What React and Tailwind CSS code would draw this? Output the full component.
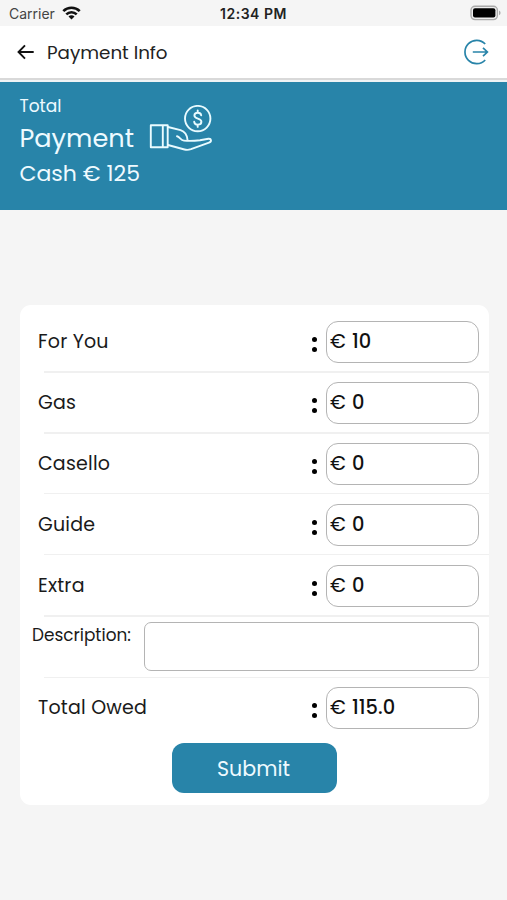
const amounts = [
  { label: "For You", value: "10" },
  { label: "Gas", value: "0" },
  { label: "Casello", value: "0" },
  { label: "Guide", value: "0" },
  { label: "Extra", value: "0" },
];

function StatusBar() {
  return (
    <div className="h-[26px] grid grid-cols-3 items-center px-[6px] text-[#222] font-['Inter',sans-serif]">
      <div className="flex items-center gap-[7px] pl-[3px] pt-[1px]">
        <span className="text-[14px] leading-none text-[#444]">Carrier</span>
        <svg className="-mt-[2px]" width="19" height="14" viewBox="0 0 19 14">
          <g fill="none" stroke="#111" strokeWidth="2.6">
            <path d="M1.3 5.2a11.6 11.6 0 0 1 16.4 0" />
            <path d="M4.3 8.4a7.4 7.4 0 0 1 10.4 0" />
          </g>
          <path d="M9.5 13.6 6.5 10.5a4.2 4.2 0 0 1 6 0z" fill="#111" />
        </svg>
      </div>
      <div className="pt-[1px] text-center text-[14px] leading-none font-semibold tracking-[0.5px] whitespace-nowrap">12:34 PM</div>
      <div className="flex justify-end">
        <svg width="31" height="16" viewBox="0 0 31 16">
          <rect x="1" y="1.2" width="26.4" height="13.4" rx="4" fill="#eee" stroke="#aaa" strokeWidth="1.4" />
          <rect x="3" y="3.2" width="22.4" height="9.4" rx="2" fill="#000" />
          <path d="M29 5.6c2 .8 2 3.8 0 4.6z" fill="#aaa" />
        </svg>
      </div>
    </div>
  );
}

function Header() {
  return (
    <header className="h-[52px] bg-white flex items-center pl-[17px] pr-[18px]">
      <svg width="18" height="16" viewBox="0 0 18 16" fill="none" stroke="#111" strokeWidth="1.9">
        <path d="M16.7 8H1.8M8 1.3 1.5 8 8 14.7" />
      </svg>
      <h1 className="ml-[12px] pt-[2px] flex-1 text-[18.3px] leading-none text-[#222]">Payment Info</h1>
      <svg width="26" height="26" viewBox="0 0 26 26" fill="none" stroke="#2884a9" strokeWidth="1.7">
        <path d="M22.2 5A11.7 11.7 0 1 0 22.2 21" />
        <path d="M9.8 13h14.5M20 8.8l4.4 4.2-4.4 4.2" />
      </svg>
    </header>
  );
}

function HandMoney() {
  return (
    <svg className="-mt-[1px]" width="64" height="48" viewBox="0 0 64 48" fill="none" stroke="#e9fbff" strokeWidth="1.9" strokeLinejoin="round" strokeLinecap="round">
      <circle cx="48.7" cy="13.6" r="12.7" />
      <path d="M52.2 10.3c-.3-1.7-1.6-2.5-3.4-2.5-2 0-3.4 1.1-3.4 2.8 0 3.9 7 2.1 7 6.1 0 1.8-1.5 2.9-3.6 2.9-2 0-3.4-1-3.6-2.8M48.7 5.4v2.4M48.7 19.6v2.3" />
      <path d="M1.8 20.3h16.9v22H1.8zM13.8 20.3v22" />
      <path d="M19 22 31.5 25.2C35.8 26.6 38 29.8 38.5 34.8M28 31.2C31 31.9 31.5 35.3 35 35.6 40.5 36.1 46 35.8 51 35.3L59.5 33.7C62.5 33.4 62.9 36.7 60 37.7L42 44.2C39.5 45 37.5 45 35.5 44.5L19 40" />
    </svg>
  );
}

function Summary() {
  return (
    <section className="h-[128px] bg-[#2884a9] pl-[19.5px] pt-[14px] text-[#eefaff]">
      <div className="h-[20px] text-[17px] leading-[20px]">Total</div>
      <div className="h-[46px] -mt-[10px] flex items-start">
        <div className="w-[129.5px] pt-[15px] text-[25.6px] leading-[34px]">Payment</div>
        <HandMoney />
      </div>
      <div className="mt-[8px] text-[22px] leading-[28px]">Cash € 125</div>
    </section>
  );
}

function AmountField({ label, value }) {
  return (
    <div className="flex items-center h-[42px] pl-[18px] pr-[10px]">
      <span className="flex-1 pb-[2px] text-[19px] leading-none text-[#1a1a1a] tracking-[0.2px]">{label}</span>
      <span className="flex flex-col gap-[5px] mr-[9px] mt-[4px]" aria-hidden="true">
        <i className="size-[5px] rounded-full bg-black" />
        <i className="size-[5px] rounded-full bg-black" />
      </span>
      <div className="w-[153px] h-[42px] flex items-center rounded-[12px] border border-[#b4b4b4] pl-[3px] text-[19.4px] leading-none text-[#111]">
        <span className="w-[22px]">€</span>
        <span className="font-medium">{value}</span>
      </div>
    </div>
  );
}

function Divider({ thick }) {
  return <div className={`ml-[24px] shrink-0 bg-[#f0f0f0] ${thick ? "h-[2px]" : "h-px"}`} />;
}

export default function App() {
  return (
    <div className="w-[507px] h-[900px] overflow-hidden bg-[#f5f5f5] font-['Poppins','Inter',sans-serif]">
      <StatusBar />
      <Header />
      <div className="h-[4px] border-t-2 border-[#d9d9d9] bg-[#eef3f5]" />
      <Summary />

      <main className="mt-[95px] ml-[20px] w-[469px] h-[500px] rounded-[11px] bg-white pt-[16px]">
        {amounts.map((row, i) => (
          <div key={row.label} className="h-[61px]">
            <AmountField {...row} />
            <div className="h-[8px]" />
            <Divider thick={i < 2 || i === 4} />
          </div>
        ))}

        <div className="h-[65px] -mt-[4px]">
          <div className="h-[55px] flex items-start pl-[12px] pr-[10px]">
            <label className="w-[112px] pt-[4px] text-[16.9px] leading-[18px] text-[#1a1a1a]">Description:</label>
            <div className="flex-1 h-[49px] rounded-[7px] border border-[#b4b4b4]" />
          </div>
          <Divider />
        </div>

        <AmountField label="Total Owed" value="115.0" />

        <button className="mt-[14px] ml-[152px] w-[165px] h-[50px] block rounded-[12px] bg-[#2884a9] pt-[2px] pr-[2px] text-[20.6px] leading-none text-[#eefaff]">
          Submit
        </button>
      </main>
    </div>
  );
}
